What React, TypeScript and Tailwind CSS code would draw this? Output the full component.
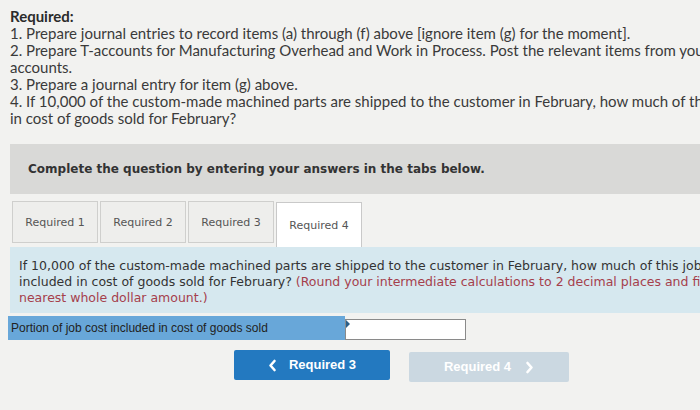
import React from 'react';

const tabs = ['Required 1', 'Required 2', 'Required 3', 'Required 4'];

function Chevron({ dir }: { dir: 'left' | 'right' }) {
  return (
    <svg width="9" height="13" viewBox="0 0 9 13" fill="none" stroke="currentColor" strokeWidth="2.6" strokeLinecap="round" strokeLinejoin="round">
      {dir === 'left' ? <path d="M6.5 2 L2.5 6.5 L6.5 11" /> : <path d="M2.5 2 L6.5 6.5 L2.5 11" />}
    </svg>
  );
}

export default function App() {
  return (
    <div className="w-[700px] h-[410px] overflow-hidden bg-[#f2f2f0] text-[#333]">
      {/* Question text */}
      <div className="pt-[8px] pl-[10px] font-['Lato',sans-serif] text-[15px] leading-[17px] whitespace-nowrap text-[#3a3a3a]">
        <div className="font-bold text-[#2b2b2b]">Required:</div>
        <div>1. Prepare journal entries to record items (a) through (f) above [ignore item (g) for the moment].</div>
        <div>2. Prepare T-accounts for Manufacturing Overhead and Work in Process. Post the relevant items from your T-</div>
        <div>accounts.</div>
        <div>3. Prepare a journal entry for item (g) above.</div>
        <div>4. If 10,000 of the custom-made machined parts are shipped to the customer in February, how much of the job cost would be</div>
        <div>in cost of goods sold for February?</div>
      </div>

      {/* Instruction banner */}
      <div className="ml-[10px] mt-[17px] h-[50px] bg-[#d9d9d7] flex items-center pl-[18px] font-['DejaVu_Sans',sans-serif] font-bold text-[12px] text-[#333] whitespace-nowrap">
        Complete the question by entering your answers in the tabs below.
      </div>

      {/* Tabs */}
      <div className="ml-[12px] mt-[7px] flex gap-[2px] items-start font-['DejaVu_Sans',sans-serif] text-[11px] text-[#555]">
        {tabs.map((t, i) =>
          i === 3 ? (
            <div key={t} className="w-[86px] h-[45px] mt-[1px] pt-[3px] bg-white border border-b-0 border-[#c9c9c9] flex items-center justify-center">
              {t}
            </div>
          ) : (
            <div key={t} className="w-[86px] h-[42px] pt-[3px] bg-[#eeeeec] border border-[#cfcfcd] flex items-center justify-center">
              {t}
            </div>
          )
        )}
      </div>

      {/* Question panel */}
      <div className="ml-[10px] h-[66px] bg-[#d6e8ef] pt-[11px] pl-[9px] font-['DejaVu_Sans',sans-serif] text-[12.5px] leading-[16px] whitespace-nowrap text-[#333]">
        <div>If 10,000 of the custom-made machined parts are shipped to the customer in February, how much of this job's cost would be</div>
        <div>
          included in cost of goods sold for February?{' '}
          <span className="text-[#a5404c]">(Round your intermediate calculations to 2 decimal places and final answer to the</span>
        </div>
        <div className="text-[#a5404c]">nearest whole dollar amount.)</div>
      </div>

      {/* Answer row */}
      <div className="ml-[8px] mt-[3px] flex items-stretch h-[24px]">
        <div className="w-[337px] bg-[#68a7d9] flex items-center pl-[3px] font-['Liberation_Sans',sans-serif] text-[12px] text-[#222]">
          Portion of job cost included in cost of goods sold
        </div>
        <div className="relative w-[121px] mt-[3px] h-[21px] bg-white border border-[#8a8a8a]">
          <div className="absolute left-0 top-0 w-0 h-0 border-t-[4px] border-b-[4px] border-l-[4px] border-t-transparent border-b-transparent border-l-[#2a5f8a]" />
        </div>
      </div>

      {/* Navigation */}
      <div className="mt-[10px] flex gap-[19px] pl-[234px] font-['Liberation_Sans',sans-serif] font-bold text-[13px]">
        <button className="w-[156px] h-[30px] bg-[#2379c0] text-white rounded-[2px] flex items-center justify-center gap-[12px]">
          <Chevron dir="left" />
          <span>Required 3</span>
        </button>
        <button className="w-[160px] h-[30px] mt-[2px] bg-[#cbd8e1] text-white rounded-[2px] flex items-center justify-center gap-[14px]">
          <span>Required 4</span>
          <Chevron dir="right" />
        </button>
      </div>
    </div>
  );
}
